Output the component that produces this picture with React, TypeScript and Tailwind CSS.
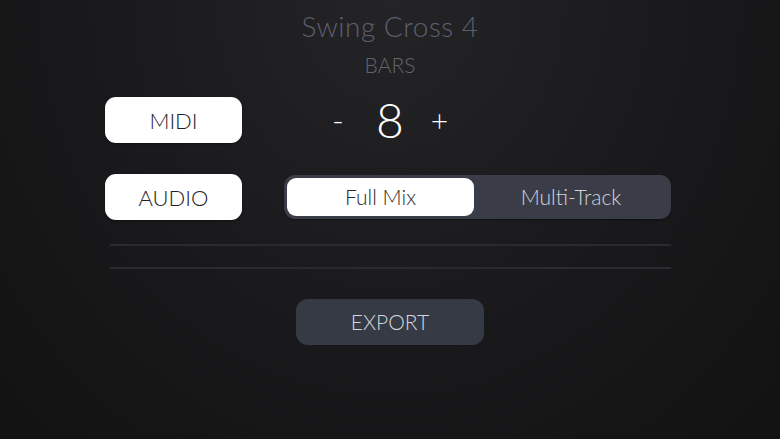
import { useState } from "react";

const font = { fontFamily: '"Lato", "Noto Sans", sans-serif' };

function PillButton({ label }: { label: string }) {
  return (
    <button className="flex h-[46px] w-[137px] items-center justify-center rounded-[11px] bg-white text-[22px] font-light text-[#222226] shadow-[0_1px_2px_rgba(0,0,0,0.4)]">
      {label}
    </button>
  );
}

export default function App() {
  const [bars, setBars] = useState(8);
  const [mode, setMode] = useState<"full" | "multi">("full");

  return (
    <div
      style={font}
      className="flex h-[439px] w-[780px] flex-col items-center overflow-hidden bg-[radial-gradient(ellipse_at_top,#242427_0%,#19191b_55%,#121213_100%)] pt-[9px]"
    >
      <h1 className="text-[28px] font-light leading-[34px] tracking-[0.5px] text-[#5c5f6e]">
        Swing Cross 4
      </h1>
      <div className="mt-[9px] text-[21px] font-light leading-[25px] text-[#61646f]">
        BARS
      </div>

      <div className="ml-[-4px] mt-[19px] flex w-[566px] items-center gap-[42px]">
        <PillButton label="MIDI" />
        <div className="flex w-[387px] items-center pl-[48px]">
          <div className="flex items-center text-white">
            <button
              onClick={() => setBars((b) => Math.max(1, b - 1))}
              className="w-[12px] text-[32px] font-light leading-none"
            >
              -
            </button>
            <span className="ml-[32px] text-[48px] font-light leading-none">
              {bars}
            </span>
            <button
              onClick={() => setBars((b) => b + 1)}
              className="ml-[27px] text-[30px] font-light leading-none"
            >
              +
            </button>
          </div>
        </div>
      </div>

      <div className="ml-[-4px] mt-[30px] flex w-[566px] items-center gap-[42px]">
        <PillButton label="AUDIO" />
        <div className="relative flex h-[44px] w-[387px] overflow-hidden rounded-[11px] bg-[#3a3d48] p-[3px] shadow-[0_1px_2px_rgba(0,0,0,0.4)]">
          <span className="absolute left-[54px] top-[31px] text-[10px] leading-[12px] text-[#55575e]">
            Mobile Share
          </span>
          <button
            onClick={() => setMode("full")}
            className={
              mode === "full"
                ? "relative z-10 flex w-[187px] items-center justify-center rounded-[9px] bg-white text-[21px] font-light text-[#2a2a2e]"
                : "relative z-10 flex w-[187px] items-center justify-center rounded-[9px] text-[21px] font-light text-[#d2d4da]"
            }
          >
            Full Mix
          </button>
          <button
            onClick={() => setMode("multi")}
            className={
              mode === "multi"
                ? "relative z-10 flex flex-1 items-center justify-center rounded-[9px] bg-white text-[21px] font-light text-[#2a2a2e]"
                : "relative z-10 flex flex-1 items-center justify-center rounded-[9px] text-[21px] font-light text-[#d2d4da]"
            }
          >
            Multi-Track
          </button>
        </div>
      </div>

      <div className="ml-[1px] mt-[24px] h-[2px] w-[561px] bg-[#2a2b2f]" />
      <div className="ml-[1px] mt-[21px] h-[2px] w-[561px] bg-[#2a2b2f]" />

      <button className="mt-[30px] flex h-[46px] w-[188px] items-center justify-center rounded-[12px] bg-[#353a45] text-[21px] font-light text-[#d4d6dc]">
        EXPORT
      </button>
    </div>
  );
}
